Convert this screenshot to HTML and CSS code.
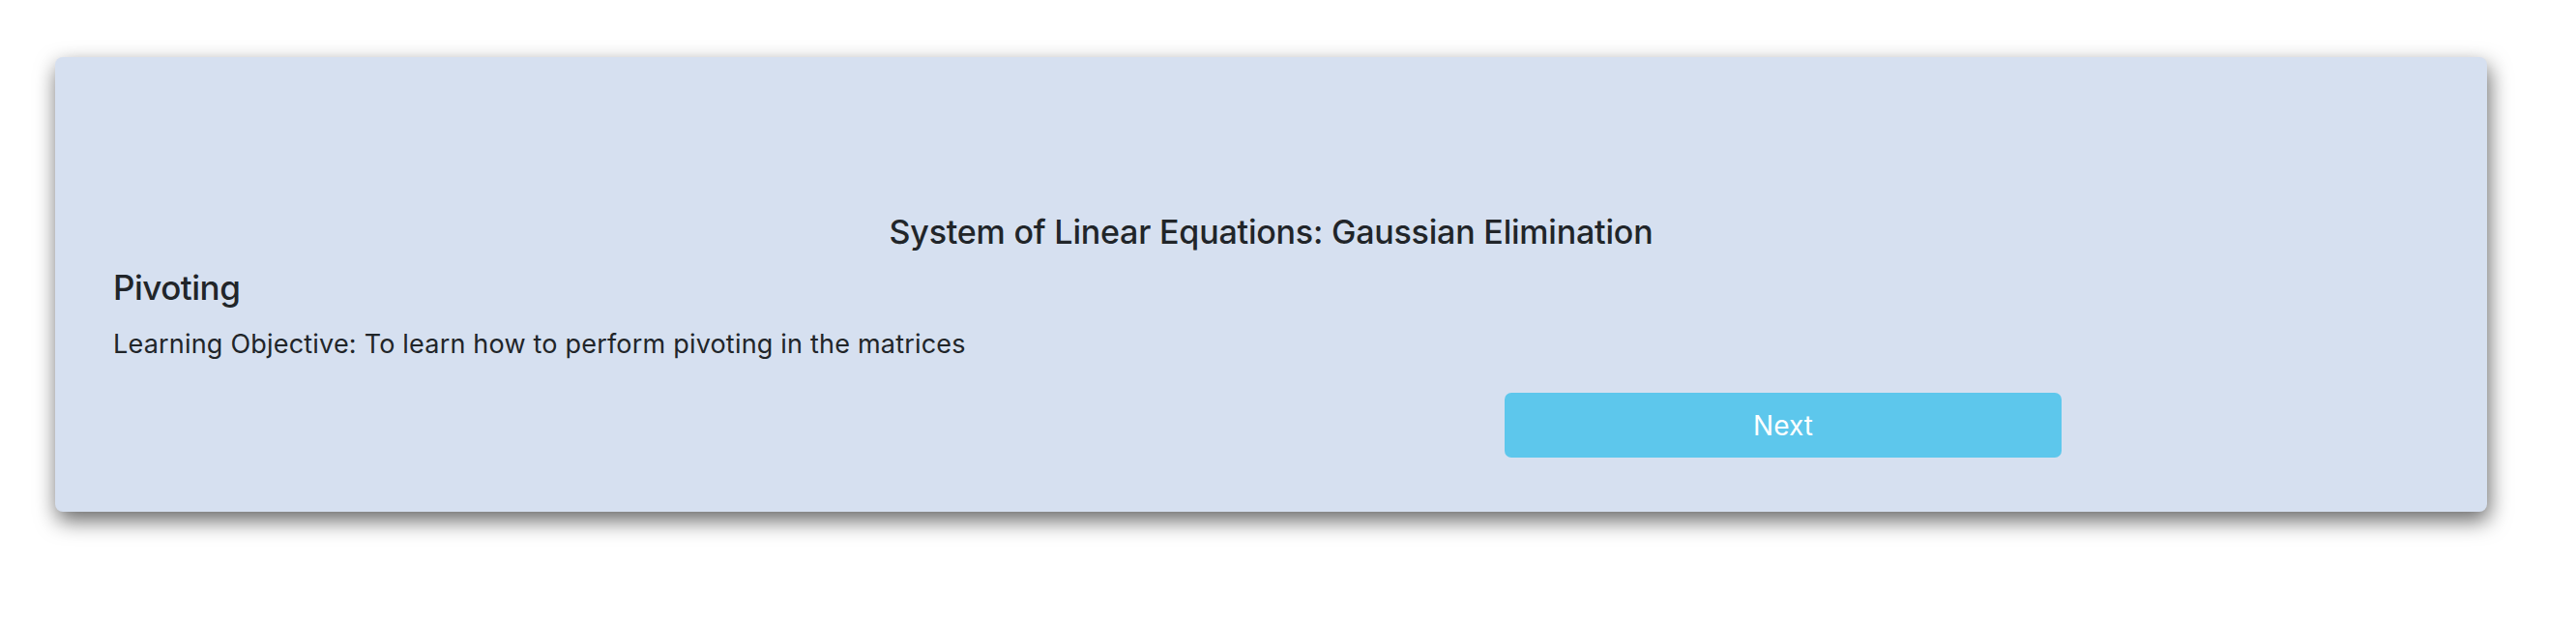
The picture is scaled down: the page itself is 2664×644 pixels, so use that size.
FILE: index.html
```html
<!DOCTYPE html>
<html lang="en">
<head>
<meta charset="utf-8">
<title>Gaussian Elimination</title>
<link rel="stylesheet" href="styles.css">
</head>
<body>
<div class="page">
  <section class="card">
    <h2 class="title">System of Linear Equations: Gaussian Elimination</h2>
    <h3 class="topic">Pivoting</h3>
    <p class="objective">Learning Objective: To learn how to perform pivoting in the matrices</p>
    <div class="actions">
      <button class="btn-next" type="button">Next</button>
    </div>
  </section>
</div>
</body>
</html>
```

FILE: styles.css
```css
html, body {
  margin: 0;
  padding: 0;
  background: #ffffff;
}

body {
  font-family: Inter, "Noto Sans", "Liberation Sans", sans-serif;
  color: #212529;
}

.page {
  padding: 59px 92px 80px 57px;
}

.card {
  box-sizing: border-box;
  width: 2515px;
  height: 470px;
  background: #d6e0f0;
  border-radius: 8px;
  box-shadow: 2px 9px 22px rgba(0, 0, 0, 0.6);
  padding: 160px 60px 0 60px;
}

.title {
  margin: 0;
  font-size: 34px;
  line-height: 42px;
  font-weight: 500;
  letter-spacing: -0.2px;
  text-align: center;
}

.topic {
  margin: 15px 0 0 0;
  font-size: 35px;
  line-height: 43px;
  font-weight: 500;
  letter-spacing: -0.5px;
}

.objective {
  margin: 19px 0 0 0;
  font-size: 27px;
  line-height: 36px;
  font-weight: 400;
  letter-spacing: 0.2px;
}

.actions {
  display: grid;
  grid-template-columns: 1439px 576px 1fr;
  margin-top: 32px;
}

.btn-next {
  grid-column: 2;
  height: 67px;
  border: none;
  border-radius: 7px;
  background: #5dc7ec;
  color: #ffffff;
  font-family: inherit;
  font-size: 28px;
  font-weight: 400;
  cursor: pointer;
}
```
